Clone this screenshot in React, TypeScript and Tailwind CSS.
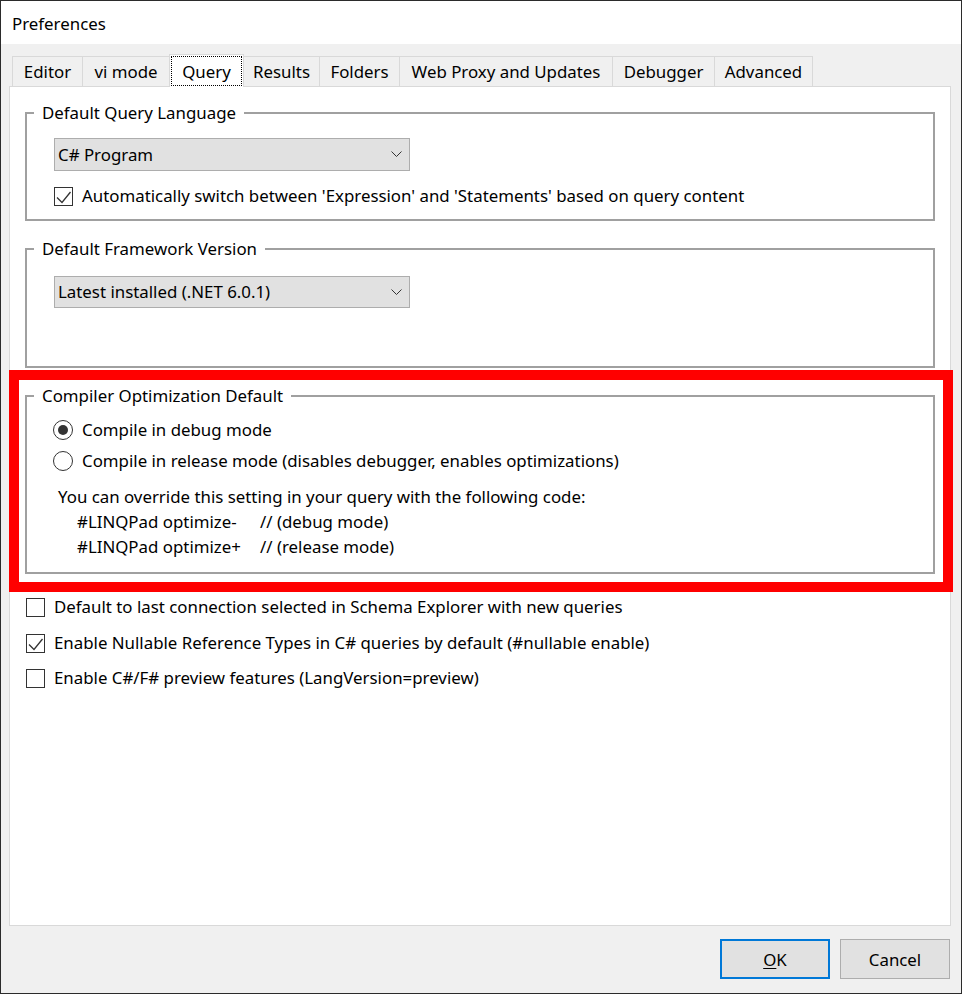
import type { ReactNode } from 'react';

const tabs = [
  { label: 'Editor', w: 'w-[71px]' },
  { label: 'vi mode', w: 'w-[88px]' },
  { label: 'Query', w: 'w-[75px]', active: true },
  { label: 'Results', w: 'w-[77px]' },
  { label: 'Folders', w: 'w-[81px]' },
  { label: 'Web Proxy and Updates', w: 'w-[214px]' },
  { label: 'Debugger', w: 'w-[103px]' },
  { label: 'Advanced', w: 'w-[99px]' },
];

function CheckBox({ checked }: { checked?: boolean }) {
  return (
    <div className="flex h-[19px] w-[19px] shrink-0 items-center justify-center border border-[#333333] bg-white">
      {checked && (
        <svg width="17" height="17" viewBox="0 0 17 17" fill="none">
          <polyline points="2,9.5 7,14.5 15.5,4" stroke="#333333" strokeWidth="1.3" />
        </svg>
      )}
    </div>
  );
}

function Radio({ checked }: { checked?: boolean }) {
  return (
    <div className="flex h-[20px] w-[20px] shrink-0 items-center justify-center rounded-full border border-[#333333] bg-white">
      {checked && <div className="h-[10px] w-[10px] rounded-full bg-[#333333]" />}
    </div>
  );
}

function Combo({ value, className = '' }: { value: string; className?: string }) {
  return (
    <div
      className={`flex w-[356px] items-center justify-between border border-[#adadad] bg-[#e1e1e1] pl-[3px] pr-[7px] ${className}`}
    >
      <span>{value}</span>
      <svg width="11" height="7" viewBox="0 0 11 7" fill="none">
        <polyline points="0.5,0.5 5.5,5.5 10.5,0.5" stroke="#333333" strokeWidth="1" />
      </svg>
    </div>
  );
}

// group box: legend sits on the top border, body padding lives on an inner wrapper
function Group({
  title,
  className = '',
  bodyClass = '',
  children,
}: {
  title: string;
  className?: string;
  bodyClass?: string;
  children: ReactNode;
}) {
  return (
    <fieldset className={`border-2 border-[#a0a0a0] ${className}`}>
      <legend className="ml-[7px] px-[8px] leading-[24px]">{title}</legend>
      <div className={bodyClass}>{children}</div>
    </fieldset>
  );
}

export default function App() {
  return (
    <div className="flex h-[994px] w-[962px] flex-col border border-[#2b2b2b] bg-[#f0f0f0] font-['Noto_Sans',sans-serif] text-[16.85px] text-black">
      {/* title bar */}
      <div className="flex h-[43px] shrink-0 items-center bg-white pl-[11px] pt-[3px]">Preferences</div>

      {/* tab strip */}
      <div className="ml-[11px] mt-[10px] flex h-[32px] items-end">
        {tabs.map((tab, i) =>
          tab.active ? (
            <div
              key={tab.label}
              className={`relative z-10 -mb-px -ml-px flex h-[33px] ${tab.w} border border-b-0 border-[#d9d9d9] bg-white p-[1px]`}
            >
              <div className="flex flex-1 items-center justify-center border border-dotted border-black pt-[1px]">
                {tab.label}
              </div>
            </div>
          ) : (
            <div
              key={tab.label}
              className={`flex h-[30px] ${tab.w} items-center justify-center border border-b-0 border-[#d9d9d9] bg-[#f0f0f0] pt-[1px] ${
                i > 0 ? '-ml-px' : ''
              }`}
            >
              {tab.label}
            </div>
          ),
        )}
      </div>

      {/* tab page */}
      <div className="ml-[8px] flex h-[840px] w-[942px] flex-col border border-[#d9d9d9] bg-white">
        <Group title="Default Query Language" className="mx-[15px] mt-[14px]" bodyClass="pb-[11px] pl-[27px]">
          <Combo value="C# Program" className="mt-[13px] h-[33px]" />
          <div className="mt-[13px] flex h-[24px] items-center gap-[9px]">
            <CheckBox checked />
            <span>Automatically switch between 'Expression' and 'Statements' based on query content</span>
          </div>
        </Group>

        <Group title="Default Framework Version" className="mx-[15px] mt-[16px]" bodyClass="pb-[58px] pl-[27px]">
          <Combo value="Latest installed (.NET 6.0.1)" className="mt-[15px] h-[32px]" />
        </Group>

        <div className="mr-[-3px] ml-[-1px] mt-[2px] border-[10px] border-[#ff0000]">
          <Group
            title="Compiler Optimization Default"
            className="mb-[8px] ml-[6px] mr-[8px] mt-[4px]"
            bodyClass="pb-[13px] pl-[26px]"
          >
            <div className="mt-[10px] flex h-[24px] items-center gap-[9px]">
              <Radio checked />
              <span>Compile in debug mode</span>
            </div>
            <div className="mt-[7px] flex h-[24px] items-center gap-[9px]">
              <Radio />
              <span>Compile in release mode (disables debugger, enables optimizations)</span>
            </div>
            <div className="ml-[5px] mt-[11px] leading-[25px]">
              You can override this setting in your query with the following code:
            </div>
            <div className="ml-[24px] flex leading-[25px]">
              <span className="w-[183px]">#LINQPad optimize-</span>
              <span>// (debug mode)</span>
            </div>
            <div className="ml-[24px] flex leading-[25px]">
              <span className="w-[183px]">#LINQPad optimize+</span>
              <span>// (release mode)</span>
            </div>
          </Group>
        </div>

        <div className="ml-[16px] mt-[3px] flex h-[24px] items-center gap-[9px]">
          <CheckBox />
          <span>Default to last connection selected in Schema Explorer with new queries</span>
        </div>
        <div className="ml-[16px] mt-[12px] flex h-[24px] items-center gap-[9px]">
          <CheckBox checked />
          <span>Enable Nullable Reference Types in C# queries by default (#nullable enable)</span>
        </div>
        <div className="ml-[16px] mt-[11px] flex h-[24px] items-center gap-[9px]">
          <CheckBox />
          <span>Enable C#/F# preview features (LangVersion=preview)</span>
        </div>
      </div>

      {/* dialog buttons */}
      <div className="mt-[13px] flex justify-end gap-[10px] pr-[11px]">
        <button className="flex h-[40px] w-[110px] items-center justify-center border-2 border-[#0078d7] bg-[#e1e1e1] pt-[2px]">
          <span>
            <span className="underline underline-offset-2">O</span>K
          </span>
        </button>
        <button className="flex h-[40px] w-[110px] items-center justify-center border border-[#adadad] bg-[#e1e1e1] pt-[2px]">
          Cancel
        </button>
      </div>
    </div>
  );
}
